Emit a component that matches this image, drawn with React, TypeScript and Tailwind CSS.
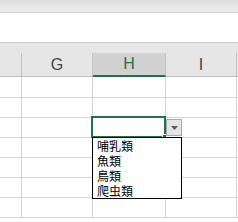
const columns = [
  { key: "F", label: "", width: "w-[22px]" },
  { key: "G", label: "G", width: "w-[71px]" },
  { key: "H", label: "H", width: "w-[73px]", active: true },
  { key: "I", label: "I", width: "w-[71px]" },
];

const rowHeights = ["h-[21px]", "h-[20px]", "h-[20px]", "h-[20px]", "h-[20px]", "h-[20px]", "h-[20px]"];

const options = ["哺乳類", "魚類", "鳥類", "爬虫類"];

export default function App() {
  return (
    <div className="relative w-[238px] h-[222px] overflow-hidden bg-white font-['Liberation_Sans',sans-serif]">
      {/* Ribbon edge + formula bar */}
      <div className="h-[13px] bg-gradient-to-b from-[#dedede] to-[#ececec] border-b border-[#d0d0d0]" />
      <div className="h-[30px] bg-white border-b border-[#c8c8c8]" />
      <div className="h-[10px] bg-[#e6e6e6]" />

      {/* Column headers */}
      <div className="flex h-[24px] bg-[#e6e6e6]">
        {columns.map((c) => (
          <div
            key={c.key}
            className={
              c.active
                ? `${c.width} shrink-0 flex items-center justify-center bg-[#d2d2d2] border-r border-[#c3c3c3] border-b-2 border-b-[#217346] text-[16px] text-[#217346]`
                : `${c.width} shrink-0 flex items-center justify-center border-r border-[#c3c3c3] border-b border-b-[#bdbdbd] text-[16px] text-[#444444]`
            }
          >
            {c.label}
          </div>
        ))}
        <div className="flex-1 border-b border-[#bdbdbd]" />
      </div>

      {/* Cells */}
      {rowHeights.map((h, i) => (
        <div key={i} className={`flex ${h}`}>
          {columns.map((c) => (
            <div key={c.key} className={`${c.width} shrink-0 border-r border-b border-[#d4d4d4]`} />
          ))}
          <div className="flex-1 border-b border-[#d4d4d4]" />
        </div>
      ))}

      {/* Active cell */}
      <div className="absolute left-[91px] top-[116px] w-[75px] h-[22px] border-2 border-[#217346]" />
      <div className="absolute left-[162px] top-[134px] w-[5px] h-[5px] bg-[#217346] border border-white" />

      {/* Dropdown button */}
      <div className="absolute left-[166px] top-[119px] w-[16px] h-[17px] bg-[#e4e4e4] border border-[#a9a9a9] flex items-center justify-center">
        <svg width="7" height="4" viewBox="0 0 7 4">
          <path d="M0 0h7L3.5 4z" fill="#5a5a5a" />
        </svg>
      </div>

      {/* Dropdown list */}
      <div className="absolute left-[92px] top-[137px] w-[90px] h-[62px] bg-white border border-black flex flex-col">
        {options.map((o) => (
          <div
            key={o}
            className="h-[15px] overflow-hidden flex items-center pl-[4px] text-[12px] leading-[12px] text-black font-['Noto_Sans_CJK_JP',sans-serif]"
          >
            {o}
          </div>
        ))}
      </div>
    </div>
  );
}
